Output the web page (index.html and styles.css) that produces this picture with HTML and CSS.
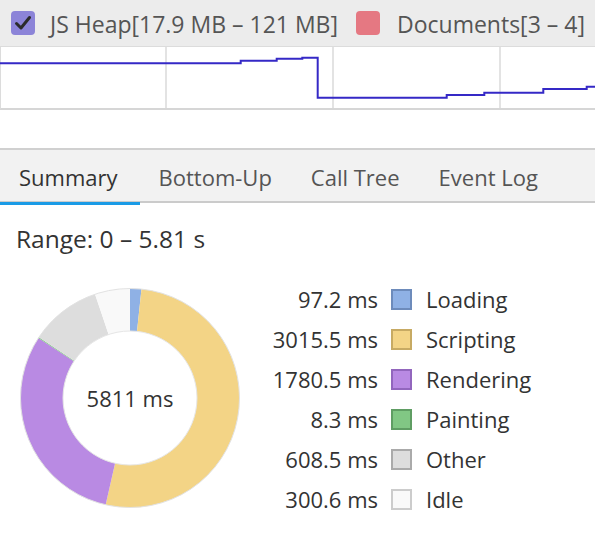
FILE: index.html
```html
<!DOCTYPE html>
<html>
<head>
<meta charset="utf-8">
<link rel="stylesheet" href="styles.css">
</head>
<body>
<div class="counters">
  <span class="cb cb-heap"><svg viewBox="0 0 24 24" width="24" height="24"><path d="M5.5 12.5 L10 17 L18.5 6.5" fill="none" stroke="#2b2b2b" stroke-width="3" stroke-linecap="round" stroke-linejoin="round"/></svg></span>
  <span class="counter-label">JS Heap[17.9 MB – 121 MB]</span>
  <span class="cb cb-docs"></span>
  <span class="counter-label">Documents[3 – 4]</span>
</div>
<div class="chart">
  <div class="grid-col c1"></div>
  <div class="grid-col"></div>
  <div class="grid-col"></div>
  <div class="grid-col last"></div>
  <svg class="heap-line" viewBox="0 0 595 61" width="595" height="61">
    <polyline fill="none" stroke="#3529c6" stroke-width="2" points="0,16.3 240.7,16.3 240.7,13.7 276.7,13.7 276.7,11.7 302.3,11.7 302.3,10.7 317.7,10.7 317.7,50.7 446.7,50.7 446.7,48 484.3,48 484.3,45.7 543.3,45.7 543.3,42 586.7,42 586.7,39.7 595,39.7"/>
  </svg>
</div>
<div class="spacer"></div>
<div class="tabs">
  <div class="tab active">Summary</div>
  <div class="tab">Bottom-Up</div>
  <div class="tab">Call Tree</div>
  <div class="tab">Event Log</div>
</div>
<div class="summary">
  <div class="range">Range: 0 – 5.81 s</div>
  <div class="breakdown">
    <div class="pie">
      <svg viewBox="0 0 220 220" width="220" height="220">
        <path fill="#8fb1e5" d="M110,0.5 A109.5,109.5 0 0 1 121.49,1.10 L117.03,43.37 A67,67 0 0 0 110,43 Z"/>
        <path fill="#f3d486" d="M121.49,1.10 A109.5,109.5 0 1 1 85.65,216.76 L95.10,175.32 A67,67 0 1 0 117.03,43.37 Z"/>
        <path fill="#b98ae3" d="M85.65,216.76 A109.5,109.5 0 0 1 18.34,50.10 L53.91,73.35 A67,67 0 0 0 95.10,175.32 Z"/>
        <path fill="#81c784" d="M18.34,50.10 A109.5,109.5 0 0 1 18.88,49.28 L54.25,72.85 A67,67 0 0 0 53.91,73.35 Z"/>
        <path fill="#dddddd" d="M18.88,49.28 A109.5,109.5 0 0 1 75.04,6.23 L88.61,46.51 A67,67 0 0 0 54.25,72.85 Z"/>
        <path fill="#f9f9f9" d="M75.04,6.23 A109.5,109.5 0 0 1 110,0.5 L110,43 A67,67 0 0 0 88.61,46.51 Z"/>
        <circle cx="110" cy="110" r="109.5" fill="none" stroke="#e2e2e2" stroke-width="1"/>
        <circle cx="110" cy="110" r="67" fill="none" stroke="#e6e6e6" stroke-width="1"/>
      </svg>
      <div class="pie-total">5811 ms</div>
    </div>
    <div class="legend">
      <div class="val">97.2 ms</div><div class="sw sw-loading"></div><div class="name">Loading</div>
      <div class="val">3015.5 ms</div><div class="sw sw-scripting"></div><div class="name">Scripting</div>
      <div class="val">1780.5 ms</div><div class="sw sw-rendering"></div><div class="name">Rendering</div>
      <div class="val">8.3 ms</div><div class="sw sw-painting"></div><div class="name">Painting</div>
      <div class="val">608.5 ms</div><div class="sw sw-other"></div><div class="name">Other</div>
      <div class="val">300.6 ms</div><div class="sw sw-idle"></div><div class="name">Idle</div>
    </div>
  </div>
</div>
</body>
</html>
```
FILE: styles.css
```css
html, body {
  margin: 0;
  padding: 0;
  background: #fff;
}
body {
  font-family: "Open Sans", "Noto Sans", sans-serif;
  color: #333;
  width: 595px;
  height: 536px;
  overflow: hidden;
}
.counters {
  height: 46px;
  background: #ececec;
  border-bottom: 1px solid #dcdcdc;
  display: flex;
  align-items: center;
  padding-left: 11px;
  font-size: 23px;
  color: #555;
  white-space: nowrap;
}
.counter-label { position: relative; top: 1px; }
.cb {
  width: 24px;
  height: 24px;
  border-radius: 4px;
  flex: none;
  display: block;
}
.cb svg { display: block; }
.cb-heap { background: #8c84d8; margin-right: 15px; }
.cb-docs { background: #e57882; margin-left: 18px; margin-right: 17px; }
.chart {
  position: relative;
  height: 61px;
  border-left: 1px solid #dcdcdc;
  border-bottom: 2px solid #d6d6d6;
  display: flex;
}
.grid-col {
  width: 165px;
  border-right: 2px solid #e3e3e3;
  flex: none;
}
.grid-col.c1 { width: 164px; }
.grid-col.last { border-right: none; flex: 1; }
.heap-line {
  position: absolute;
  left: -1px;
  top: 0;
}
.spacer { height: 38px; }
.tabs {
  background: #f2f2f2;
  border-top: 2px solid #d0d0d0;
  border-bottom: 2px solid #cbcbcb;
  height: 51px;
  display: flex;
  font-size: 22px;
  color: #555;
}
.tab {
  padding: 0 20px 0 19px;
  display: flex;
  align-items: center;
  position: relative;
  top: 1px;
}
.tab.active { color: #333; padding-right: 22px; }
.tab.active::after {
  content: "";
  position: absolute;
  left: 0;
  right: 0;
  bottom: -3px;
  height: 3px;
  background: #1a9be6;
}
.range {
  padding: 21px 0 0 16px;
  font-size: 24.5px;
  line-height: 30px;
  color: #333;
}
.breakdown {
  display: flex;
  align-items: flex-start;
  margin-top: 25px;
}
.pie {
  position: relative;
  margin-left: 20px;
  margin-top: 9px;
  width: 220px;
  height: 220px;
}
.pie svg { display: block; }
.pie-total {
  position: absolute;
  left: 0;
  right: 0;
  top: 0;
  bottom: 0;
  display: flex;
  align-items: center;
  justify-content: center;
  font-size: 22px;
  color: #333;
}
.legend {
  margin-left: 12px;
  display: grid;
  grid-template-columns: 126px 21px auto;
  column-gap: 13px;
  grid-auto-rows: 40px;
  align-items: center;
  font-size: 22px;
  color: #333;
}
.val { text-align: right; white-space: nowrap; }
.sw {
  width: 21px;
  height: 21px;
  box-sizing: border-box;
  border: 2px solid;
}
.name { padding-left: 1px; }
.sw-loading { background: #8fb1e5; border-color: #6d8bbb; }
.sw-scripting { background: #f3d486; border-color: #c7aa63; }
.sw-rendering { background: #b98ae3; border-color: #9266bd; }
.sw-painting { background: #81c784; border-color: #5f9d63; }
.sw-other { background: #dddddd; border-color: #aaaaaa; }
.sw-idle { background: #f9f9f9; border-color: #cccccc; }
```
